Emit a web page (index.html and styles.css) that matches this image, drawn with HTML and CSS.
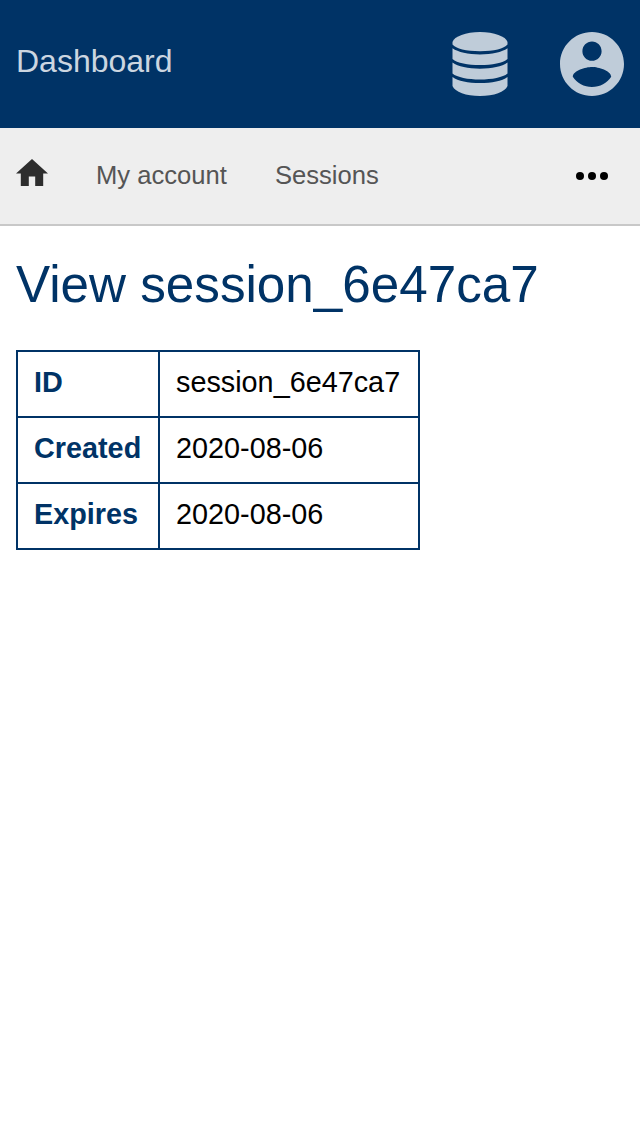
FILE: index.html
```html
<!DOCTYPE html>
<html lang="en">
<head>
<meta charset="utf-8">
<title>View session_6e47ca7</title>
<link rel="stylesheet" href="styles.css">
</head>
<body>
<header class="topbar">
  <a class="brand">Dashboard</a>
  <div class="actions">
    <svg class="action-icon" viewBox="0 0 64 64" aria-label="Data">
      <path d="M4.500 10C6 4.500 18 0 32 0s26 4.500 27.500 10v2.500C56 16.700 46 19.200 32 19.200S8 16.700 4.500 12.500z"/>
      <path d="M4.500 16.300C10 20.200 20 22.400 32 22.400s22-2.200 27.500-6.100v10.700C55 31 44 33.100 32 33.100S9 31 4.500 27z"/>
      <path d="M4.500 30.600C10 34.600 20 36.700 32 36.700s22-2.100 27.500-6.100v10.900C55 45.400 44 47.500 32 47.500S9 45.400 4.500 41.500z"/>
      <path d="M4.500 45C10 49 20 51 32 51S54 49 59.500 45v9C57 60 46 64 32 64S7 60 4.500 54z"/>
    </svg>
    <svg class="action-icon" viewBox="2 2 20 20" aria-label="Account">
      <path d="M12 2C6.480 2 2 6.480 2 12s4.480 10 10 10 10-4.480 10-10S17.520 2 12 2zm0 3c1.660 0 3 1.340 3 3s-1.340 3-3 3-3-1.340-3-3 1.340-3 3-3zm0 14.200c-2.500 0-4.710-1.280-6-3.220.030-1.990 4-3.080 6-3.080 1.990 0 5.970 1.090 6 3.080-1.290 1.940-3.500 3.220-6 3.220z"/>
    </svg>
  </div>
</header>
<nav class="nav">
  <svg class="home" viewBox="2 3 20 17" aria-label="Home"><path d="M10 20v-6h4v6h5v-8h3L12 3 2 12h3v8z"/></svg>
  <a class="nav-link">My account</a>
  <a class="nav-link">Sessions</a>
  <svg class="more" viewBox="0 0 32 8" aria-label="More"><circle cx="4" cy="4" r="4"/><circle cx="16" cy="4" r="4"/><circle cx="28" cy="4" r="4"/></svg>
</nav>
<main class="content">
  <h1 class="title">View session_6e47ca7</h1>
  <table class="details">
    <tr><th>ID</th><td>session_6e47ca7</td></tr>
    <tr><th>Created</th><td>2020-08-06</td></tr>
    <tr><th>Expires</th><td>2020-08-06</td></tr>
  </table>
</main>
</body>
</html>
```

FILE: styles.css
```css
* { box-sizing: border-box; }
body {
  margin: 0;
  background: #fff;
  color: #000;
  font-family: "Liberation Sans", Arial, sans-serif;
}
.topbar {
  display: flex;
  justify-content: space-between;
  align-items: center;
  height: 128px;
  padding: 0 16px;
  background: #036;
}
.brand {
  padding-bottom: 6px;
  font-size: 32px;
  line-height: 36px;
  color: #ccd6e0;
}
.actions { display: flex; gap: 48px; }
.action-icon {
  width: 64px;
  height: 64px;
  fill: #bfccd9;
}
.nav {
  display: flex;
  align-items: center;
  gap: 48px;
  height: 98px;
  padding: 0 32px 0 16px;
  background: #eee;
  border-bottom: 2px solid #c8c8c8;
}
.home {
  width: 32px;
  height: 27.2px;
  margin-bottom: 7.2px;
  fill: #2d2d2d;
}
.nav-link {
  padding-bottom: 2px;
  font-size: 25.6px;
  line-height: 30px;
  color: #555;
}
.more {
  width: 32px;
  height: 8px;
  margin-left: auto;
}
.content { padding: 29px 16px; }
.title {
  margin: 0 0 35px;
  font-size: 51.2px;
  font-weight: 400;
  line-height: 60px;
  color: #036;
}
.details {
  border-collapse: collapse;
  font-size: 28.8px;
  line-height: 32px;
}
.details th,
.details td {
  padding: 14px 16px 18px;
  border: 2px solid #036;
  text-align: left;
  white-space: nowrap;
}
.details th { width: 142px; color: #036; }
.details td { width: 260px; }
```
